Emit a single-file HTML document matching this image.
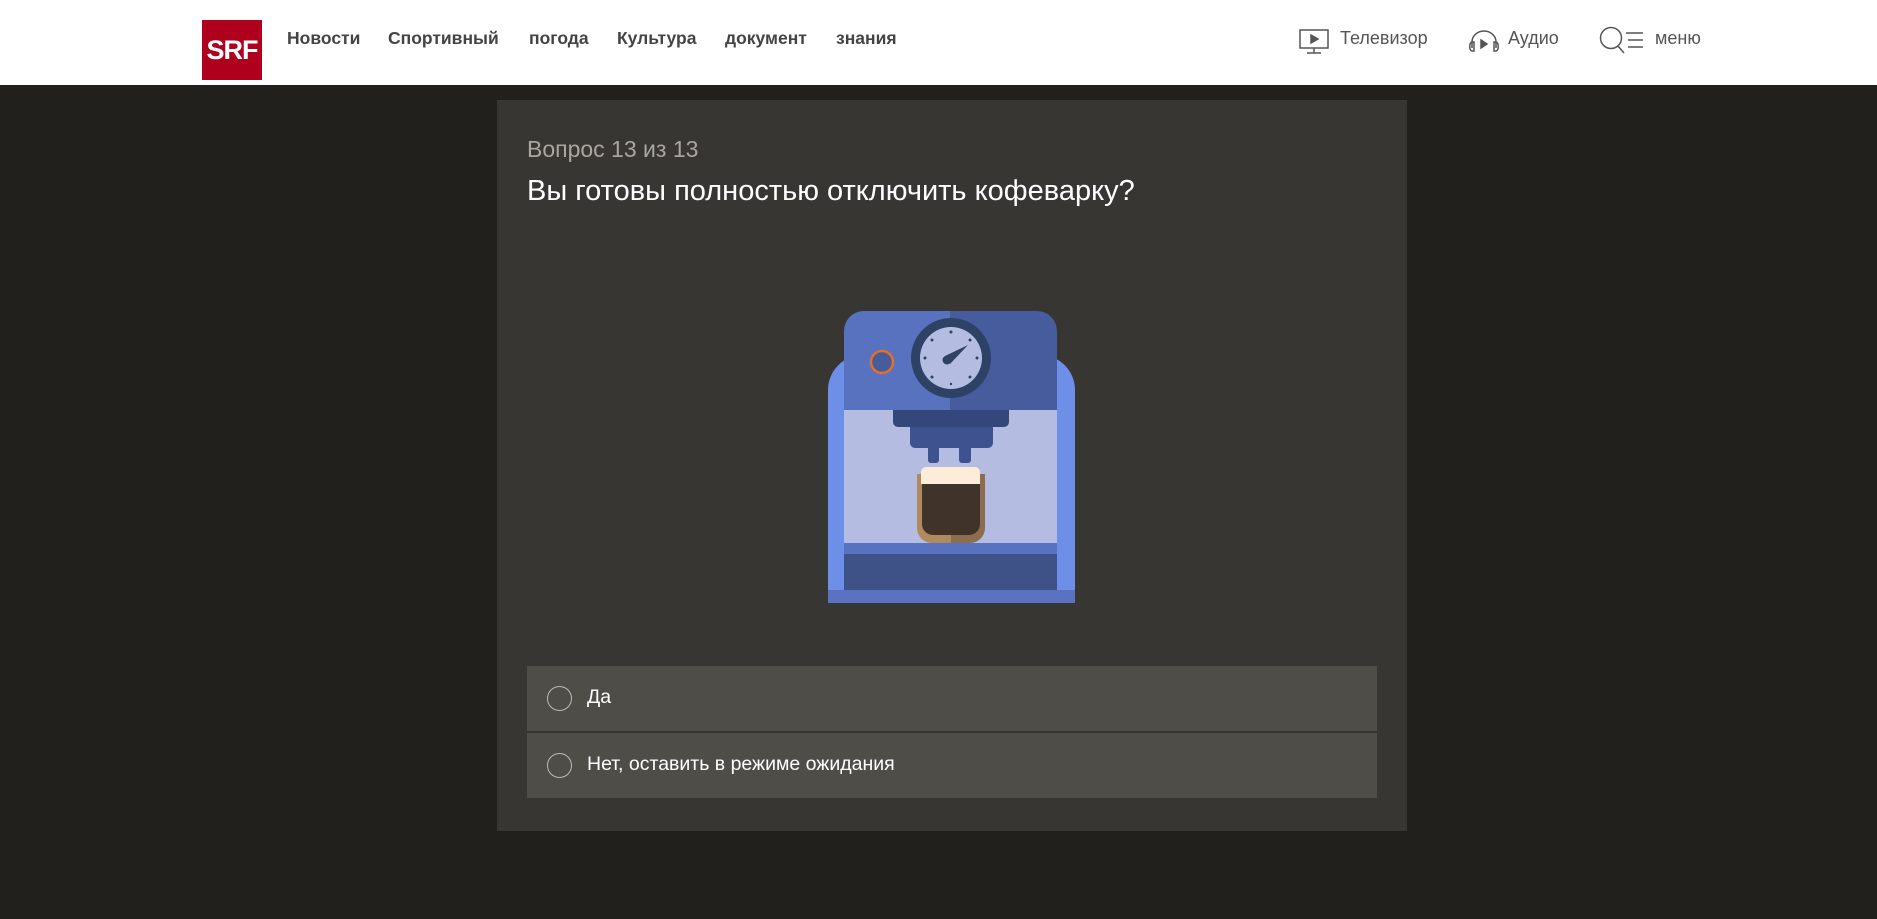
<!DOCTYPE html>
<html><head><meta charset="utf-8"><style>
*{margin:0;padding:0;box-sizing:border-box}
body{width:1877px;height:919px;background:#21201c;font-family:"Liberation Sans",sans-serif;position:relative;overflow:hidden}
.hdr{position:absolute;left:0;top:0;width:1877px;height:85px;background:#fff}
.logo{position:absolute;left:202px;top:20px;width:60px;height:60px;background:#af001e;color:#fff;font-weight:bold;font-size:27px;line-height:60px;text-align:center;letter-spacing:-1px}
.nav{position:absolute;top:28px;font-weight:bold;font-size:17.5px;color:#444;white-space:nowrap}
.nr{position:absolute;top:28px;font-size:18px;color:#555;white-space:nowrap}
.panel{position:absolute;left:497px;top:100px;width:910px;height:731px;background:#383632}
.t{position:absolute;white-space:nowrap;transform-origin:left top}
.row{position:absolute;left:527px;width:850px;height:65px;background:#4f4d48}
.row .c{position:absolute;left:20px;top:20px;width:25px;height:25px;border:1.5px solid #bbb;border-radius:50%}
.row span{position:absolute;left:60px;top:20px;color:#fff;font-size:19.5px}
</style></head><body>
<div class="hdr">
 <div class="logo">SRF</div>
 <div class="nav" style="left:287px">Новости</div>
 <div class="nav" style="left:388px">Спортивный</div>
 <div class="nav" style="left:529px">погода</div>
 <div class="nav" style="left:617px">Культура</div>
 <div class="nav" style="left:725px">документ</div>
 <div class="nav" style="left:836px">знания</div>
 <svg style="position:absolute;left:1299px;top:28px" width="32" height="28" viewBox="0 0 32 28" fill="none" stroke="#555" stroke-width="1.5"><rect x="1" y="2" width="28" height="18"/><path d="M8 25h14M15 20v5"/><path d="M12 7l7 4-7 4z" fill="#555"/></svg>
 <div class="nr" style="left:1340px">Телевизор</div>
 <svg style="position:absolute;left:1468px;top:28px" width="32" height="26" viewBox="0 0 32 26" fill="none" stroke="#555" stroke-width="1.5"><path d="M4 20V14a12 11 0 0 1 24 0v6"/><path d="M4 14c-3 1-3 8 0 9h2V14z"/><path d="M28 14c3 1 3 8 0 9h-2V14z"/><path d="M13 12l6 4-6 4z" fill="#555"/></svg>
 <div class="nr" style="left:1508px">Аудио</div>
 <svg style="position:absolute;left:1599px;top:26px" width="46" height="30" viewBox="0 0 46 30" fill="none" stroke="#555" stroke-width="1.5"><circle cx="12" cy="12" r="10.5"/><path d="M19 20l6 7M27 7h17M29 14h15M29 21h15"/></svg>
 <div class="nr" style="left:1655px">меню</div>
</div>
<div class="panel"></div>
<div class="t" style="left:527px;top:136px;font-size:23px;color:#a9a6a0">Вопрос 13 из 13</div>
<div class="t" style="left:527px;top:175px;font-size:29px;color:#fff">Вы готовы полностью отключить кофеварку?</div>
<svg style="position:absolute;left:800px;top:290px" width="300" height="330" viewBox="0 0 300 330">
 <path d="M28 313V100a35 35 0 0 1 35-35h177a35 35 0 0 1 35 35v213z" fill="#6d8fe8"/>
 <rect x="28" y="300" width="247" height="13" fill="#5a72bf"/>
 <rect x="44" y="120" width="213" height="133" fill="#b4bce2"/>
 <rect x="44" y="253" width="213" height="11" fill="#5872c0"/>
 <rect x="44" y="264" width="213" height="36" fill="#3f5288"/>
 <path d="M44 120V41a20 20 0 0 1 20-20h86v99z" fill="#5872c0"/>
 <path d="M150 21h87a20 20 0 0 1 20 20v79H150z" fill="#465c9c"/>
 <circle cx="82" cy="72" r="11" fill="#465c9c" stroke="#e0702a" stroke-width="2.5"/>
 <circle cx="151" cy="68" r="40" fill="#2e4266"/>
 <circle cx="151" cy="68" r="31" fill="#b4bce2"/>
 <g fill="#2e4266"><circle cx="151" cy="42" r="1.5"/><circle cx="151" cy="94" r="1.2"/><circle cx="125" cy="68" r="1.5"/><circle cx="177" cy="68" r="1.5"/><circle cx="132" cy="50" r="1.5"/><circle cx="170" cy="50" r="1.5"/><circle cx="132" cy="87" r="1.5"/><circle cx="170" cy="87" r="1.5"/></g>
 <path d="M145 66L168 55L150 74z" fill="#2e4266"/><circle cx="147" cy="70" r="4.5" fill="#2e4266"/>
 <path d="M93 120h116v12a5 5 0 0 1-5 5H98a5 5 0 0 1-5-5z" fill="#33477a"/>
 <path d="M110 137h83v16a5 5 0 0 1-5 5h-73a5 5 0 0 1-5-5z" fill="#3e5290"/>
 <rect x="128" y="155" width="11" height="18" rx="3" fill="#3e5290"/>
 <rect x="159" y="155" width="12" height="18" rx="3" fill="#3e5290"/>
 <path d="M117 184h34v69h-19a15 15 0 0 1-15-15z" fill="#b08a5e"/>
 <path d="M151 184h34v54a15 15 0 0 1-15 15h-19z" fill="#8c6d4d"/>
 <path d="M122 194h58v40a11 11 0 0 1-11 11h-36a11 11 0 0 1-11-11z" fill="#40342a"/>
 <path d="M121 194v-12a5 5 0 0 1 5-5h49a5 5 0 0 1 5 5v12z" fill="#fdecd8"/>
</svg>
<div class="row" style="top:666px"><div class="c"></div><span>Да</span></div>
<div class="row" style="top:733px"><div class="c"></div><span>Нет, оставить в режиме ожидания</span></div>
</body></html>
